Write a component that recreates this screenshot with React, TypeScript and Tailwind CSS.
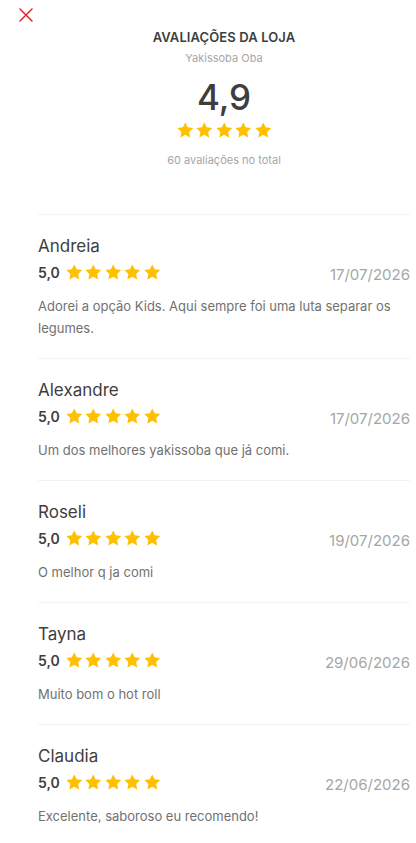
import { X } from 'lucide-react';

const reviews = [
  { name: 'Andreia', rating: '5,0', date: '17/07/2026', text: 'Adorei a opção Kids. Aqui sempre foi uma luta separar os legumes.' },
  { name: 'Alexandre', rating: '5,0', date: '17/07/2026', text: 'Um dos melhores yakissoba que já comi.' },
  { name: 'Roseli', rating: '5,0', date: '19/07/2026', text: 'O melhor q ja comi' },
  { name: 'Tayna', rating: '5,0', date: '29/06/2026', text: 'Muito bom o hot roll' },
  { name: 'Claudia', rating: '5,0', date: '22/06/2026', text: 'Excelente, saboroso eu recomendo!' },
];

function Star() {
  return (
    <svg viewBox="0 0 24 24" className="w-[16.5px] h-[16.5px]" fill="#ffc000">
      <path d="M12 .6l3.5 7.2 7.9 1.1-5.7 5.6 1.4 7.9L12 18.7l-7.1 3.7 1.4-7.9L.6 8.9l7.9-1.1z" />
    </svg>
  );
}

function Stars() {
  return (
    <div className="flex gap-[3px]">
      {[0, 1, 2, 3, 4].map((i) => (
        <Star key={i} />
      ))}
    </div>
  );
}

export default function App() {
  return (
    <div className="relative min-h-[843px] bg-white text-[#3e3e3e]" style={{ fontFamily: 'Inter, "Noto Sans", sans-serif' }}>
      <button className="absolute left-[14px] top-[3px] p-0">
        <X className="w-[24px] h-[24px]" strokeWidth={1.5} color="#ea1d2c" />
      </button>

      <div className="ml-[38px] mr-[6px]">
        {/* Header */}
        <div className="flex flex-col items-center pt-[27px] pb-[46px]">
          <h1 className="text-[13px] font-semibold leading-[20px] tracking-[0.1px]">AVALIAÇÕES DA LOJA</h1>
          <p className="text-[11px] leading-[16px] text-[#a6a6a5] mt-[3px]">Yakissoba Oba</p>
          <div className="text-[35px] font-medium leading-[40px] mt-[11px]">4,9</div>
          <div className="mt-[5px]">
            <Stars />
          </div>
          <p className="text-[11px] leading-[16px] text-[#a6a6a5] mt-[13px]">60 avaliações no total</p>
        </div>

        {/* Reviews */}
        {reviews.map((r, idx) => (
          <div key={idx} className="border-t border-[#f2f2f2] pt-[19px] pb-[19px]">
            <div className="text-[17px] leading-[24px]">{r.name}</div>
            <div className="flex items-center justify-between mt-[3px] h-[24px]">
              <div className="flex items-center gap-[6px]">
                <span className="text-[14px] font-semibold leading-[20px]">{r.rating}</span>
                <Stars />
              </div>
              <span className="text-[15px] leading-[20px] text-[#a6a6a5] mt-[5px]">{r.date}</span>
            </div>
            <p className="text-[13px] leading-[22px] text-[#717171] mt-[10px] pr-[10px]">{r.text}</p>
          </div>
        ))}
      </div>
    </div>
  );
}
